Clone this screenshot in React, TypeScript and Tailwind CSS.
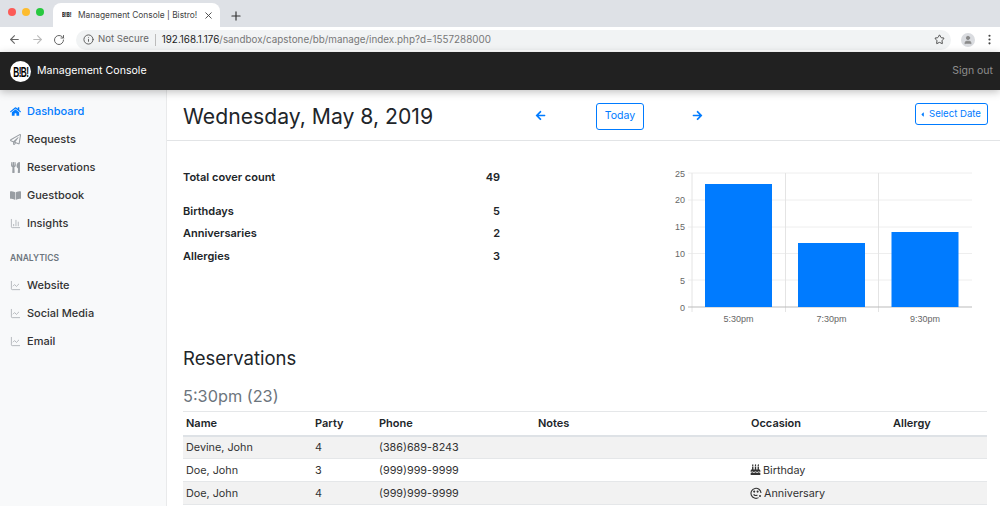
import { ArrowLeft, ArrowRight, RotateCw, Info, Star, X, Plus, EllipsisVertical, User, ChartColumn, ChartLine } from "lucide-react";
import { FaHome, FaRegPaperPlane, FaUtensils, FaBookOpen, FaArrowLeft, FaArrowRight, FaBirthdayCake, FaCaretLeft } from "react-icons/fa";

const rows = [
  { name: "Devine, John", party: 4, phone: "(386)689-8243", occasion: "" },
  { name: "Doe, John", party: 3, phone: "(999)999-9999", occasion: "Birthday" },
  { name: "Doe, John", party: 4, phone: "(999)999-9999", occasion: "Anniversary" },
];

function Logo() {
  return (
    <div className="w-[21px] h-[21px] rounded-full bg-white flex items-center justify-center overflow-hidden">
      <span className="text-[15px] font-black text-black tracking-[-1px] leading-none [font-family:'Liberation_Sans',sans-serif] scale-x-[0.55] whitespace-nowrap">B!B!</span>
    </div>
  );
}

function NavItem({ icon, label, active }: { icon: React.ReactNode; label: string; active?: boolean }) {
  return (
    <div className={`h-7 flex items-center pl-[10px] text-[11px] font-medium ${active ? "text-[#007bff]" : "text-[#333]"}`}>
      <span className={`w-[17px] shrink-0 text-[11px] ${active ? "text-[#007bff]" : "text-[#999ea3]"}`}>{icon}</span>
      {label}
    </div>
  );
}

function AnniversaryIcon() {
  return (
    <svg width="12" height="12" viewBox="0 0 12 12" fill="none" stroke="#333" strokeWidth="1.1" className="inline mr-[2px] -mt-[2px]">
      <path d="M8.6 10.6A5 5 0 1 1 11 6" />
      <path d="M3.6 7.4c1 1.4 2.8 1.4 3.8.4" />
      <circle cx="4.2" cy="4.6" r="0.5" fill="#333" />
      <circle cx="7.6" cy="4.6" r="0.5" fill="#333" />
      <circle cx="10" cy="9" r="1" fill="#333" stroke="none" />
    </svg>
  );
}

function Chart() {
  const bars = [
    { x: 705, y: 184, label: "5:30pm" },
    { x: 798, y: 243, label: "7:30pm" },
    { x: 891.5, y: 232, label: "9:30pm" },
  ];
  return (
    <svg width="340" height="170" viewBox="650 160 340 170" className="block">
      {[173, 200, 227, 253.5, 280].map((y) => (
        <line key={y} x1="688" x2="972" y1={y} y2={y} stroke="#eeeeee" />
      ))}
      {[692, 785.5, 878.5].map((x) => (
        <line key={x} x1={x} x2={x} y1="173" y2="312" stroke="#e4e4e4" />
      ))}
      <line x1="688" x2="972" y1="307" y2="307" stroke="#bbb" />
      {bars.map((b) => (
        <rect key={b.x} x={b.x} y={b.y} width="67" height={307 - b.y} fill="#007bff" />
      ))}
      {[25, 20, 15, 10, 5, 0].map((v, i) => (
        <text key={v} x="685" y={176.5 + i * 26.8} textAnchor="end" fontSize="9" fill="#666" fontFamily="Liberation Sans">
          {v}
        </text>
      ))}
      {bars.map((b) => (
        <text key={b.label} x={b.x + 33.5} y="322" textAnchor="middle" fontSize="9" fill="#666" fontFamily="Liberation Sans">
          {b.label}
        </text>
      ))}
    </svg>
  );
}

function Stat({ label, value, className }: { label: string; value: number; className?: string }) {
  return (
    <div className={`flex justify-between text-[11px] leading-4 font-semibold text-[#212529] ${className ?? ""}`}>
      <span>{label}</span>
      <span>{value}</span>
    </div>
  );
}

export default function App() {
  return (
    <div className="w-[1000px] h-[506px] overflow-hidden flex flex-col bg-white [font-family:Inter,sans-serif]">
      {/* browser tabs */}
      <div className="h-[27px] bg-[#dee1e6] flex items-end shrink-0">
        <div className="flex gap-[6px] pl-[8px] self-start pt-[8px]">
          <span className="w-[8px] h-[8px] rounded-full bg-[#fc5b57]" />
          <span className="w-[8px] h-[8px] rounded-full bg-[#fdbc2e]" />
          <span className="w-[8px] h-[8px] rounded-full bg-[#27c83f]" />
        </div>
        <div className="ml-[9px] w-[167px] h-[24px] bg-white rounded-t-lg flex items-center pl-[9px] pr-[6px]">
          <span className="text-[6px] font-black text-[#333] w-[16px] shrink-0 leading-none scale-x-75 origin-left whitespace-nowrap">B!B!</span>
          <span className="text-[8.4px] text-[#444] whitespace-nowrap flex-1">Management Console | Bistro!</span>
          <X size={11} className="text-[#444] shrink-0" />
        </div>
        <Plus size={14} className="text-[#333] ml-[9px] mb-[4px]" />
      </div>
      {/* toolbar */}
      <div className="h-[25px] bg-white flex items-center shrink-0 text-[#666]">
        <ArrowLeft size={13} className="ml-[8px]" />
        <ArrowRight size={13} className="ml-[10px] text-[#bbb]" />
        <RotateCw size={12} className="ml-[9px]" />
        <div className="ml-[11px] w-[875px] h-[20px] rounded-full bg-[#f1f3f4] flex items-center pl-[7px] pr-[6px]">
          <Info size={11} className="text-[#555] shrink-0" />
          <span className="ml-[4px] text-[9.6px] text-[#666]">Not Secure</span>
          <span className="ml-[6px] mr-[6px] w-px h-[12px] bg-[#bbb]" />
          <span className="text-[9.85px] text-[#222]">192.168.1.176</span>
          <span className="text-[9.85px] text-[#777]">/sandbox/capstone/bb/manage/index.php?d=1557288000</span>
          <Star size={11} className="ml-auto text-[#444]" />
        </div>
        <div className="ml-[10px] w-[14px] h-[14px] rounded-full bg-[#dadce0] flex items-center justify-center">
          <User size={10} className="text-[#888]" fill="#888" />
        </div>
        <EllipsisVertical size={13} className="ml-[8px] text-[#444]" />
      </div>
      {/* navbar */}
      <div className="h-[38px] bg-[#212121] flex items-center justify-between pl-[10px] pr-[7px] shrink-0 shadow-[0_2px_8px_rgba(0,0,0,0.25)] z-10">
        <div className="flex items-center gap-[6px]">
          <Logo />
          <span className="text-white text-[10.6px]">Management Console</span>
        </div>
        <span className="text-[#8e8e8e] text-[10.5px]">Sign out</span>
      </div>
      <div className="flex flex-1 min-h-0">
        {/* sidebar */}
        <div className="w-[167px] shrink-0 bg-[#f8f9fa] border-r border-[#e9eaeb] pt-[7px]">
          <NavItem icon={<FaHome />} label="Dashboard" active />
          <NavItem icon={<FaRegPaperPlane />} label="Requests" />
          <NavItem icon={<FaUtensils />} label="Reservations" />
          <NavItem icon={<FaBookOpen />} label="Guestbook" />
          <NavItem icon={<ChartColumn size={11} strokeWidth={1.5} />} label="Insights" />
          <div className="mt-[14px] mb-[6px] pl-[10px] text-[8.5px] font-semibold text-[#6c757d] leading-[14px]">ANALYTICS</div>
          <NavItem icon={<ChartLine size={11} strokeWidth={1.5} />} label="Website" />
          <NavItem icon={<ChartLine size={11} strokeWidth={1.5} />} label="Social Media" />
          <NavItem icon={<ChartLine size={11} strokeWidth={1.5} />} label="Email" />
        </div>
        {/* main */}
        <div className="flex-1 min-w-0 flex flex-col">
          <div className="h-[51px] shrink-0 border-b border-[#e2e4e6] flex items-center pl-[16px] pr-[12px] text-[#007bff]">
            <h1 className="w-[336px] text-[21.2px] text-[#212529] font-normal mt-[3px]">Wednesday, May 8, 2019</h1>
            <FaArrowLeft className="text-[11px] ml-[16px]" />
            <div className="ml-[50px] h-[27px] w-[48px] rounded-[3px] border border-[#007bff] flex items-center justify-center text-[10.6px] mt-[2px]">Today</div>
            <FaArrowRight className="text-[11px] ml-[48px]" />
            <div className="ml-auto -mt-[3px] h-[22px] w-[73px] rounded-[3px] border border-[#007bff] flex items-center justify-center gap-[3px] pr-[3px] pt-[1px] text-[9.6px]">
              <FaCaretLeft className="text-[7px]" />
              Select Date
            </div>
          </div>
          <div className="flex justify-between h-[204px] shrink-0">
            <div className="w-[317px] ml-[16px] pt-[28px]">
              <Stat label="Total cover count" value={49} />
              <Stat label="Birthdays" value={5} className="mt-[18px]" />
              <Stat label="Anniversaries" value={2} className="mt-[6px]" />
              <Stat label="Allergies" value={3} className="mt-[7px]" />
            </div>
            <div className="mr-[10px] mt-[19px]">
              <Chart />
            </div>
          </div>
          <div className="pl-[16px] pr-[12px]">
            <h2 className="text-[18.5px] text-[#212529] leading-[26px]">Reservations</h2>
            <h3 className="text-[16.3px] text-[#6c757d] mt-[14px] leading-[22px]">5:30pm (23)</h3>
            <table className="w-[804px] table-fixed mt-[4px] text-[10.8px] text-[#333] border-t border-[#e5e7e9]">
              <colgroup>
                <col className="w-[129px]" />
                <col className="w-[64px]" />
                <col className="w-[159px]" />
                <col className="w-[213px]" />
                <col className="w-[142px]" />
                <col />
              </colgroup>
              <thead>
                <tr className="h-[24px] border-b-2 border-[#dee2e6] text-[11px] text-[#212529] text-left">
                  <th className="pl-[3px] font-semibold">Name</th>
                  <th className="pl-[3px] font-semibold">Party</th>
                  <th className="pl-[3px] font-semibold">Phone</th>
                  <th className="pl-[3px] font-semibold">Notes</th>
                  <th className="pl-[3px] font-semibold">Occasion</th>
                  <th className="pl-[3px] font-semibold">Allergy</th>
                </tr>
              </thead>
              <tbody>
                {rows.map((r, i) => (
                  <tr key={i} className={`h-[23px] border-b border-[#e5e7e9] ${i % 2 === 0 ? "bg-[#f2f2f2]" : "bg-white"}`}>
                    <td className="pl-[3px] pt-[2px]">{r.name}</td>
                    <td className="pl-[3px] pt-[2px]">{r.party}</td>
                    <td className="pl-[3px] pt-[2px]">{r.phone}</td>
                    <td />
                    <td className="pl-[2px] pt-[2px]">
                      {r.occasion === "Birthday" && <FaBirthdayCake className="inline text-[11px] mr-[2px] -mt-[2px]" />}
                      {r.occasion === "Anniversary" && <AnniversaryIcon />}
                      {r.occasion}
                    </td>
                    <td />
                  </tr>
                ))}
              </tbody>
            </table>
          </div>
        </div>
      </div>
    </div>
  );
}
